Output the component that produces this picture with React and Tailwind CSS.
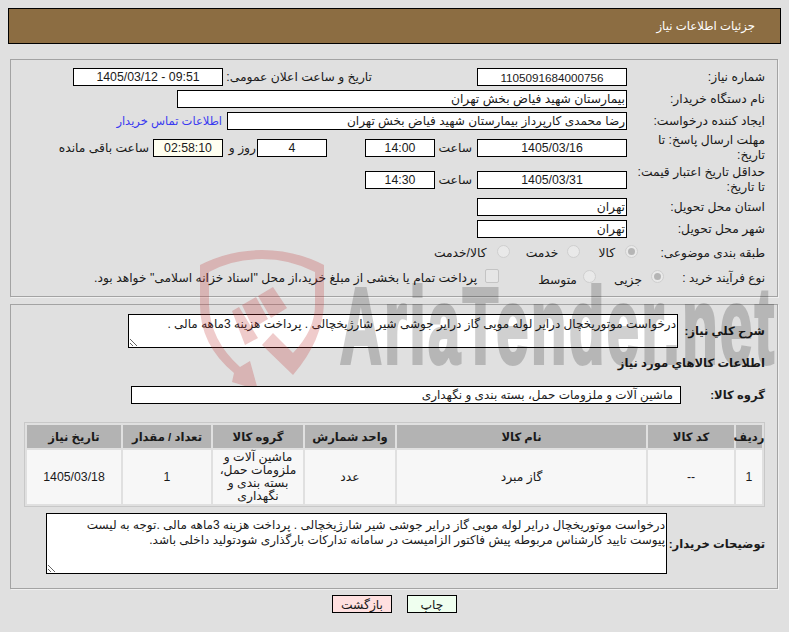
const Field = ({ value, className = "", ltr = false }) => (
  <input
    readOnly
    dir={ltr ? "ltr" : "rtl"}
    value={value}
    className={`h-[18px] shrink-0 border border-black bg-white px-px outline-none ${className}`}
  />
);

const Radio = ({ checked = false, className = "" }) => (
  <span
    className={`flex h-[13px] w-[13px] shrink-0 items-center justify-center rounded-full border border-[#cfcfcf] bg-[#e9e9e9] ${className}`}
  >
    {checked && <span className="h-[7px] w-[7px] rounded-full bg-[#b5b5b5]"></span>}
  </span>
);

const Row = ({ label, labelWidth = "w-[138px]", className = "", children }) => (
  <div className={`flex items-center ${className}`}>
    <div className={`shrink-0 pl-[5px] leading-[15px] ${labelWidth}`}>{label}</div>
    {children}
  </div>
);

const Bold = ({ children }) => <b className="text-[11.6px]">{children}</b>;

const columns = ["ردیف", "کد کالا", "نام کالا", "واحد شمارش", "گروه کالا", "تعداد / مقدار", "تاریخ نیاز"];

const Watermark = () => (
  <div className="pointer-events-none absolute left-0 top-0 z-10 h-[386px] w-full overflow-hidden">
    <svg className="absolute left-[190px] top-[245px]" width="150" height="150" viewBox="0 0 150 150">
      <g fill="rgb(192,48,48)" fillOpacity="0.25">
        <path d="M10 20 Q40 5 72 5 Q105 5 134 20 L134 58 Q133 95 103 130 L72 100 L83 88 L103 108 Q125 85 125 60 L125 27 Q100 14 72 14 Q42 14 19 27 L19 60 Q20 95 50 122 L60 116 L68 145 L42 137 L44 128 Q10 100 10 60 Z" />
        <polygon points="68,51 83,42 97,63 81,73" />
        <polygon points="52,60 66,52 78,74 63,83" />
        <polygon points="42,66 49,62 68,93 55,100" />
      </g>
    </svg>
    <div
      dir="ltr"
      className="absolute left-[340px] top-[261px] origin-left scale-x-[0.54] whitespace-nowrap font-['Liberation_Sans',sans-serif] text-[107px] font-bold leading-[130px] tracking-[4.8px] text-black opacity-[0.18] [-webkit-text-stroke:4px_black]"
    >
      AriaTender.net
    </div>
  </div>
);

export default function App() {
  return (
    <div
      dir="rtl"
      className="relative h-[632px] w-[789px] overflow-hidden bg-[#e0e0e0] pt-2 font-['Liberation_Sans','DejaVu_Sans',sans-serif] text-[12.3px] text-[#1a1a1a]"
    >
      <Watermark />

      <div className="mx-2 flex h-[36px] items-center border border-black bg-[#8c6d42] pr-[25px] text-[11.7px] text-white">
        جزئیات اطلاعات نیاز
      </div>

      <div className="ml-[10px] mr-[11px] mt-[15px] border border-[#a3a3a3] pb-[9px] pr-3 pt-2 shadow-[1px_1px_0_#f0f0f0]">
        <Row label="شماره نیاز:">
          <Field value="1105091684000756" className="w-[150px] text-center text-[11.7px]" ltr />
          <div className="ms-[105px] w-[149px] shrink-0 whitespace-nowrap">تاریخ و ساعت اعلان عمومی:</div>
          <Field value="1405/03/12 - 09:51" className="w-[150px] text-center" ltr />
        </Row>
        <Row label="نام دستگاه خریدار:" className="mt-1">
          <Field value="بیمارستان شهید فیاض بخش تهران" className="w-[450px]" />
        </Row>
        <Row label="ایجاد کننده درخواست:" className="mt-1">
          <Field value="رضا محمدی کارپرداز بیمارستان شهید فیاض بخش تهران" className="w-[400px] text-[12.1px]" />
          <a className="ms-[5px] text-[11.5px] text-[#3a3af0]">اطلاعات تماس خریدار</a>
        </Row>
        <Row label="مهلت ارسال پاسخ: تا تاریخ:" className="mt-[3px] h-[30px]">
          <Field value="1405/03/16" className="w-[150px] text-center" ltr />
          <div className="w-[42px] shrink-0 pr-[5px]">ساعت</div>
          <Field value="14:00" className="w-[70px] text-center" ltr />
          <Field value="4" className="mr-[38px] w-[70px] text-center" ltr />
          <div className="w-[34px] shrink-0 pr-[1px]">روز و</div>
          <Field value="02:58:10" className="w-[70px] !bg-[#fffff0] text-center" ltr />
          <div className="ms-1 shrink-0">ساعت باقی مانده</div>
        </Row>
        <Row label="حداقل تاریخ اعتبار قیمت: تا تاریخ:" className="mt-[2px] h-[30px]">
          <Field value="1405/03/31" className="w-[150px] text-center" ltr />
          <div className="w-[42px] shrink-0 pr-[5px]">ساعت</div>
          <Field value="14:30" className="w-[70px] text-center" ltr />
        </Row>
        <Row label="استان محل تحویل:" className="mt-[3px]">
          <Field value="تهران" className="w-[150px]" />
        </Row>
        <Row label="شهر محل تحویل:" className="mt-1">
          <Field value="تهران" className="w-[150px]" />
        </Row>
        <Row
          label={<span className="text-[12px]">طبقه بندی موضوعی:</span>}
          labelWidth="w-[127px] whitespace-nowrap"
          className="mt-[6px] h-[18px]"
        >
          <Radio checked className="mb-1" />
          <span className="ms-[10px]">کالا</span>
          <Radio className="mb-1 ms-[18px]" />
          <span className="ms-[9px]">خدمت</span>
          <Radio className="mb-1 ms-[16px]" />
          <span className="ms-[10px]">کالا/خدمت</span>
        </Row>
        <Row
          label={<span className="text-[12px]">نوع فرآیند خرید :</span>}
          labelWidth="w-[101px] whitespace-nowrap"
          className="mt-[7px] h-[18px]"
        >
          <Radio checked className="mb-1" />
          <span className="ms-[9px] mt-1">جزیی</span>
          <Radio className="mb-1 ms-[18px]" />
          <span className="ms-[6px] mt-1">متوسط</span>
          <span className="mb-1 ms-[39px] h-[14px] w-[14px] shrink-0 rounded-[2px] border border-[#c4c4c4] bg-[#e6e6e6]"></span>
          <span className="ms-[8px] whitespace-nowrap">
            پرداخت تمام یا بخشی از مبلغ خرید،از محل "اسناد خزانه اسلامی" خواهد بود.
          </span>
        </Row>
      </div>

      <div className="ml-[10px] mr-[11px] mt-[7px] border border-[#a3a3a3] pb-[14px] pr-3 pt-[9px] shadow-[1px_1px_0_#f0f0f0]">
        <Row label={<Bold>شرح کلي نیاز:</Bold>} labelWidth="w-[87px] whitespace-nowrap">
          <textarea
            readOnly
            value="درخواست موتوریخچال درایر لوله مویی گاز درایر جوشی شیر شارژیخچالی . پرداخت هزینه 3ماهه مالی ."
            className="block h-[34px] w-[550px] resize border border-black bg-white px-px py-[2px] text-[12px] leading-[15px] outline-none"
          />
        </Row>
        <div className="mt-[7px] text-[11.6px] font-bold leading-[15px]">اطلاعات کالاهاي مورد نیاز</div>
        <Row label={<Bold>گروه کالا:</Bold>} labelWidth="w-[84px] whitespace-nowrap" className="mt-[16px]">
          <Field value="ماشین آلات و ملزومات حمل، بسته بندی و نگهداری" className="w-[550px] pr-[7px] text-[12px]" />
        </Row>

        <div className="mt-[18px] grid w-[741px] grid-cols-[26px_86px_249px_90px_90px_88px_94px] gap-[2px] border border-[#c8c8c8] p-[2px]">
          {columns.map((c) => (
            <div key={c} className="flex h-[23px] items-center justify-center bg-[#b3b3b3] text-[11.6px] font-bold whitespace-nowrap">
              {c}
            </div>
          ))}
          {[
            "1",
            "--",
            "گاز مبرد",
            "عدد",
            "ماشین آلات و ملزومات حمل، بسته بندی و نگهداری",
            "1",
            "1405/03/18",
          ].map((c, i) => (
            <div key={i} className="flex h-[54px] items-center justify-center bg-[#f7f7f7] px-1 text-center leading-[13px]">
              {c}
            </div>
          ))}
        </div>

        <Row label={<Bold>توضیحات خریدار:</Bold>} labelWidth="w-[98px] whitespace-nowrap" className="mt-[6px]">
          <textarea
            readOnly
            value="درخواست موتوریخچال درایر لوله مویی گاز درایر جوشی شیر شارژیخچالی . پرداخت هزینه 3ماهه مالی .توجه به لیست پیوست تایید کارشناس مربوطه پیش فاکتور الزامیست در سامانه تدارکات بارگذاری شودتولید داخلی باشد."
            className="block h-[61px] w-[621px] resize border border-black bg-white py-1 pl-[10px] pr-px text-[12px] leading-[15px] outline-none"
          />
        </Row>
      </div>

      <div className="mt-[6px] flex justify-center gap-[15px]">
        <button className="h-[18px] w-[50px] border border-black bg-[#efffef]">چاپ</button>
        <button className="h-[18px] w-[60px] border border-black bg-[#ffe0e0]">بازگشت</button>
      </div>
    </div>
  );
}
